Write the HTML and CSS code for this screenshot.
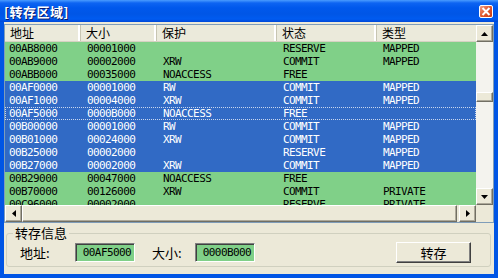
FILE: index.html
```html
<!DOCTYPE html>
<html lang="zh">

<head>
    <meta charset="UTF-8">
    <title>转存区域</title>
    <link rel="stylesheet" href="styles.css">
</head>

<body>
    <div class="window">
        <div class="titlebar">
            <span class="title">[转存区域]</span>
            <span class="close">
                <svg width="10" height="9" viewBox="0 0 10 9"><path d="M1.5 1 L8.5 8 M8.5 1 L1.5 8" stroke="#fff" stroke-width="2" /></svg>
            </span>
        </div>
        <div class="client">
            <div class="list">
                <div class="view">
                    <div class="head">
                        <span>地址</span><span>大小</span><span>保护</span><span>状态</span><span>类型</span>
                    </div>
                    <div class="row green"><span>00AB8000</span><span>00001000</span><span></span><span>RESERVE</span><span>MAPPED</span></div>
                    <div class="row green"><span>00AB9000</span><span>00002000</span><span>XRW</span><span>COMMIT</span><span>MAPPED</span></div>
                    <div class="row green"><span>00ABB000</span><span>00035000</span><span>NOACCESS</span><span>FREE</span><span></span></div>
                    <div class="row sel"><span>00AF0000</span><span>00001000</span><span>RW</span><span>COMMIT</span><span>MAPPED</span></div>
                    <div class="row sel"><span>00AF1000</span><span>00004000</span><span>XRW</span><span>COMMIT</span><span>MAPPED</span></div>
                    <div class="row sel focus"><span>00AF5000</span><span>0000B000</span><span>NOACCESS</span><span>FREE</span><span></span></div>
                    <div class="row sel"><span>00B00000</span><span>00001000</span><span>RW</span><span>COMMIT</span><span>MAPPED</span></div>
                    <div class="row sel"><span>00B01000</span><span>00024000</span><span>XRW</span><span>COMMIT</span><span>MAPPED</span></div>
                    <div class="row sel"><span>00B25000</span><span>00002000</span><span></span><span>RESERVE</span><span>MAPPED</span></div>
                    <div class="row sel"><span>00B27000</span><span>00002000</span><span>XRW</span><span>COMMIT</span><span>MAPPED</span></div>
                    <div class="row green"><span>00B29000</span><span>00047000</span><span>NOACCESS</span><span>FREE</span><span></span></div>
                    <div class="row green"><span>00B70000</span><span>00126000</span><span>XRW</span><span>COMMIT</span><span>PRIVATE</span></div>
                    <div class="row green"><span>00C96000</span><span>00002000</span><span></span><span>RESERVE</span><span>PRIVATE</span></div>
                </div>
                <div class="vscroll">
                    <div class="sbtn"><svg width="7" height="4" viewBox="0 0 7 4"><path d="M3.5 0 L7 4 L0 4 Z" fill="#000" /></svg></div>
                    <div class="track"><div class="thumb"></div></div>
                    <div class="sbtn"><svg width="7" height="4" viewBox="0 0 7 4"><path d="M0 0 L7 0 L3.5 4 Z" fill="#000" /></svg></div>
                </div>
                <div class="hscroll">
                    <div class="sbtn"><svg width="4" height="7" viewBox="0 0 4 7"><path d="M4 0 L4 7 L0 3.5 Z" fill="#000" /></svg></div>
                    <div class="track"><div class="hthumb"></div></div>
                    <div class="sbtn"><svg width="4" height="7" viewBox="0 0 4 7"><path d="M0 0 L4 3.5 L0 7 Z" fill="#000" /></svg></div>
                </div>
                <div class="corner"></div>
            </div>

            <fieldset class="group">
                <legend>转存信息</legend>
                <div class="fields">
                    <span class="label">地址:</span>
                    <span class="box">00AF5000</span>
                    <span class="label size">大小:</span>
                    <span class="box">0000B000</span>
                    <button class="dump">转存</button>
                </div>
            </fieldset>
        </div>
    </div>
</body>

</html>
```

FILE: styles.css
```css
* {
    margin: 0;
    padding: 0;
    box-sizing: border-box;
}

body {
    background-color: #fff;
    font-family: "Noto Sans CJK SC", sans-serif;
    font-size: 12px;
}

.window {
    width: 498px;
    height: 278px;
    display: flex;
    flex-direction: column;
    background: #0055e5;
}

.titlebar {
    height: 22px;
    display: flex;
    align-items: center;
    justify-content: space-between;
    padding: 0 5px 0 4px;
    background: linear-gradient(#4a9cff 0, #0d64f2 3px, #0058ec 8px, #0056e6 14px, #005bf0 19px, #0048d8 22px);
}

.title {
    color: #fff;
    font-weight: bold;
    font-size: 13px;
    text-shadow: 1px 1px 0 #0a1a6a;
    letter-spacing: 0.5px;
}

.close {
    width: 14px;
    height: 13px;
    display: flex;
    align-items: center;
    justify-content: center;
    border: 1px solid #fff;
    border-radius: 2px;
    background: linear-gradient(135deg, #f0a088, #e0582e 50%, #c83c14);
}

.client {
    flex: 1;
    margin: 0 4px 4px 4px;
    background: #ece9d8;
    display: flex;
    flex-direction: column;
}

.list {
    margin-top: 2px;
    height: 199px;
    border: 1px solid #7f9db9;
    display: grid;
    grid-template-columns: 471px 17px;
    grid-template-rows: 180px 17px;
    background: #fff;
}

.view {
    overflow: hidden;
    background: #fff;
}

.head,
.row {
    display: grid;
    grid-template-columns: 76px 76px 120px 100px 99px;
}

.head {
    height: 17px;
    background: #ebeadb;
    border-bottom: 1px solid #d6d2c2;
}

.head span {
    padding-left: 5px;
    line-height: 16px;
    border-right: 1px solid #c7c5b2;
    box-shadow: inset -2px 0 0 #fff;
    color: #000;
}

.head span:last-child {
    border-right: 0;
    box-shadow: none;
}

.row {
    height: 13px;
    font-family: "DejaVu Sans Mono", monospace;
    font-size: 11px;
    letter-spacing: -0.6px;
    line-height: 13px;
}

.row span {
    padding-left: 6px;
    white-space: nowrap;
}

.row span:first-child {
    padding-left: 4px;
}

.green {
    background: #80d088;
    color: #000;
}

.sel {
    background: #316ac5;
    color: #fff;
}

.focus {
    outline: 1px dotted #c9d6ee;
    outline-offset: -1px;
}

.vscroll {
    display: flex;
    flex-direction: column;
}

.hscroll {
    display: flex;
}

.track {
    flex: 1;
    background: #f4f3ee;
}

.vscroll .track {
    padding-top: 50px;
}

.sbtn {
    width: 17px;
    height: 17px;
    display: flex;
    align-items: center;
    justify-content: center;
    background: #ece9d8;
    border: 1px solid;
    border-color: #fff #716f64 #716f64 #fff;
    box-shadow: inset -1px -1px 0 #aca899;
}

.thumb {
    height: 10px;
    background: #ece9d8;
    border: 1px solid;
    border-color: #fff #716f64 #716f64 #fff;
    box-shadow: inset -1px -1px 0 #aca899;
}

.hscroll .track {
    background: #ece9d8;
    display: flex;
}

.hthumb {
    flex: 1;
    margin-right: 2px;
    border: 1px solid;
    border-color: #fff #716f64 #716f64 #fff;
    box-shadow: inset -1px -1px 0 #aca899;
}

.corner {
    background: #ece9d8;
}

.group {
    margin: 3px 3px 0 2px;
    height: 41px;
    border: 1px solid #d0d0bf;
    border-radius: 3px;
    padding: 0 0 0 13px;
}

.group legend {
    margin-left: -7px;
    padding: 0 2px;
    font-size: 13px;
    line-height: 14px;
    color: #000;
}

.fields {
    display: flex;
    align-items: center;
    height: 24px;
    margin-top: 0;
}

.label {
    font-size: 13px;
    width: 55px;
}

.label.size {
    width: 43px;
    margin-left: 17px;
}

.box {
    width: 60px;
    height: 19px;
    background: #80d088;
    border: 1px solid;
    border-color: #808080 #fff #fff #808080;
    box-shadow: inset 1px 1px 0 #404040;
    font-family: "DejaVu Sans Mono", monospace;
    font-size: 11px;
    letter-spacing: -0.6px;
    line-height: 17px;
    text-align: right;
    padding-right: 3px;
}

.dump {
    margin-left: auto;
    margin-right: 19px;
    width: 75px;
    height: 21px;
    font-family: "Noto Sans CJK SC", sans-serif;
    font-size: 13px;
    background: #ece9d8;
    border: 1px solid;
    border-color: #fff #404040 #404040 #fff;
    box-shadow: inset -1px -1px 0 #808080;
}
```
